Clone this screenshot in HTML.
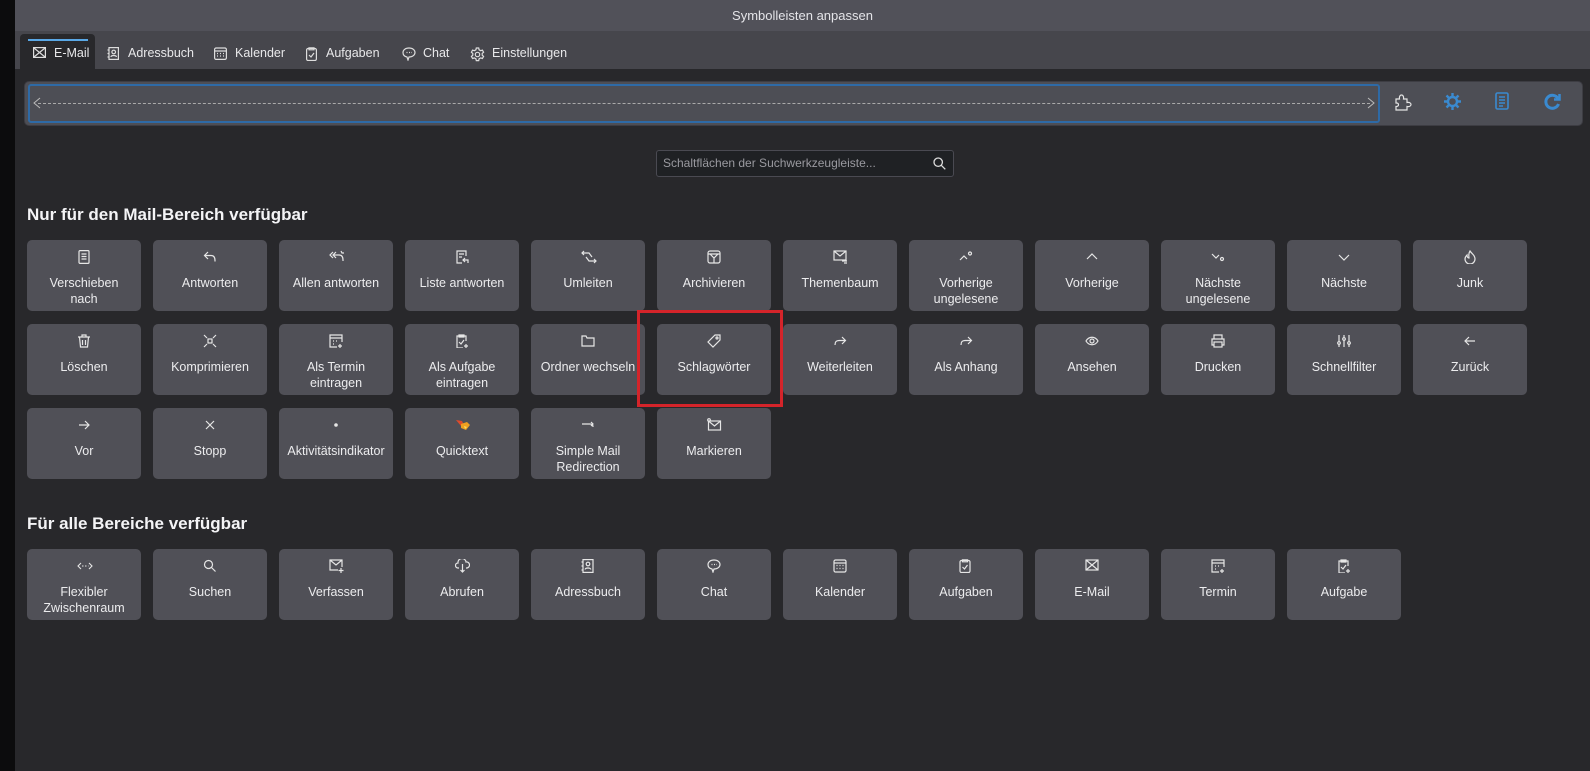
<!DOCTYPE html>
<html><head><meta charset="utf-8">
<style>
*{box-sizing:border-box;margin:0;padding:0}
body{width:1590px;height:771px;background:#0c0c0d;font-family:"Liberation Sans",sans-serif;overflow:hidden;position:relative;color:#ececec}
#win{position:absolute;left:15px;top:0;width:1575px;height:771px;background:#28282b}
#title{position:absolute;left:0;top:0;width:100%;height:31px;background:#515159;color:#e4e4e8;font-size:13px;text-align:center;line-height:31px}
#tabs{position:absolute;left:0;top:31px;width:100%;height:38px;background:#46464c}
.tab{position:absolute;top:0;height:38px;font-size:12.5px;color:#e8e8ea;line-height:45px;white-space:nowrap}
.tab svg{position:absolute;top:16px}
#tsel{position:absolute;left:5px;top:3px;width:75px;height:35px;background:#28282b;border-radius:4px 4px 0 0}
#tsel:before{content:"";position:absolute;left:8px;top:5px;width:60px;height:2px;background:#5aa8e6}
#tb{position:absolute;left:9px;top:81px;width:1559px;height:45px;background:#4d4e55;border:1px solid #3d3d43;border-radius:5px}
#drop{position:absolute;left:3px;top:2px;width:1352px;height:39px;border:2px solid #2e6aa6;border-radius:3px}
#drop:before{content:"";position:absolute;left:8px;right:8px;top:17px;border-top:1px dashed #aaa}
#search{position:absolute;left:641px;top:150px;width:298px;height:27px;background:#1f2124;border:1px solid #4a4a52;border-radius:3px;font-size:12px;color:#9a9aa0;line-height:25px;padding-left:6px}
h2{position:absolute;font-size:17px;font-weight:bold;color:#f4f4f6;white-space:nowrap}
.b{position:absolute;width:114px;height:71px;background:#505057;border-radius:5px;text-align:center;font-size:12.5px;color:#ececee}
.b svg{position:absolute;left:50px;top:10px}
.b span{position:absolute;left:0;right:0;top:35px;line-height:16px}
#red{position:absolute;left:622px;top:310px;width:146px;height:97px;border:3px solid #d4242a}
</style></head><body>
<div id="win">
<div id="title">Symbolleisten anpassen</div>
<div id="tabs">
<div id="tsel"></div>
<div class="tab" style="left:18px"><svg width="13" height="11" viewBox="0 0 13 11" fill="none" stroke="#ddd" stroke-width="1.2"><rect x="0.6" y="0.6" width="11.8" height="9.8"/><path d="M1 1l11 9M12 1L1 10"/></svg><span style="margin-left:21px">E-Mail</span></div>
<div class="tab" style="left:92px"><svg width="12" height="13" viewBox="0 0 12 13" fill="none" stroke="#ddd" stroke-width="1.2"><rect x="2" y="0.6" width="9.4" height="11.8"/><circle cx="6.7" cy="5" r="1.8"/><path d="M4 10c0-2 5.4-2 5.4 0M0.5 3h2M0.5 6.5h2M0.5 10h2"/></svg><span style="margin-left:21px">Adressbuch</span></div>
<div class="tab" style="left:199px"><svg width="13" height="13" viewBox="0 0 13 13" fill="none" stroke="#ddd" stroke-width="1.2"><rect x="0.6" y="1" width="11.8" height="11.4" rx="1.5"/><path d="M0.6 4h11.8M3 6.5h1M6 6.5h1M9 6.5h1M3 9h1M6 9h1M9 9h1"/></svg><span style="margin-left:21px">Kalender</span></div>
<div class="tab" style="left:291px"><svg width="11" height="14" viewBox="0 0 11 14" fill="none" stroke="#ddd" stroke-width="1.2"><rect x="0.6" y="1.5" width="9.8" height="12" rx="1.5"/><path d="M3 0.8h5v2H3zM3 8l2 2 3-4"/></svg><span style="margin-left:20px">Aufgaben</span></div>
<div class="tab" style="left:387px"><svg width="14" height="14" viewBox="0 0 14 14" fill="none" stroke="#ddd" stroke-width="1.2"><path d="M7 1c3.5 0 6 2 6 4.5S10.5 10 7 10L6 13 5 10C2.5 9.5 1 7.7 1 5.5 1 3 3.5 1 7 1z"/><path d="M4.5 5.5h1M7 5.5h1M9.5 5.5h.5"/></svg><span style="margin-left:21px">Chat</span></div>
<div class="tab" style="left:455px"><svg width="15" height="15" viewBox="0 0 15 15" fill="none" stroke="#ddd" stroke-width="1.2"><circle cx="7.5" cy="7.5" r="2.2"/><path d="M6.3 1h2.4l.4 1.8 1.6.9 1.7-.6 1.2 2.1-1.4 1.2v1.8l1.4 1.2-1.2 2.1-1.700-.6-1.6.9-.4 1.8H6.3l-.4-1.8-1.6-.9-1.7.6-1.2-2.1 1.4-1.2V6.4L1.4 5.2l1.2-2.1 1.7.6 1.6-.9z"/></svg><span style="margin-left:22px">Einstellungen</span></div>
</div>
<div id="tb"><div id="drop"><svg style="position:absolute;left:3px;top:11px" width="8" height="12" viewBox="0 0 8 12" fill="none" stroke="#bbb"><path d="M7 1L1 6l6 5"/></svg><svg style="position:absolute;right:3px;top:11px" width="8" height="12" viewBox="0 0 8 12" fill="none" stroke="#bbb"><path d="M1 1l6 5-6 5"/></svg></div>
<svg style="position:absolute;left:1369px;top:11px" width="18" height="18" viewBox="0 0 18 18" fill="none" stroke="#e4e4e4" stroke-width="1.2"><path d="M2 6h3.5C5 3 6.5 2 7.5 2S10 3 9.5 6H13v3.5c3-.5 4 1 4 2s-1 2.5-4 2V17H2v-3.5c2 0 2.5-1 2.5-1.8S4 9.8 2 10z"/></svg>
<svg style="position:absolute;left:1419px;top:11px" width="17" height="17" viewBox="0 0 17 17"><circle cx="8.5" cy="8.5" r="4.5" fill="none" stroke="#3a8ad0" stroke-width="2.4"/><g stroke="#3a8ad0" stroke-width="2.4"><path d="M8.5 0v4M8.5 13v4M0 8.5h4M13 8.5h4M2.5 2.5l2.8 2.8M11.7 11.7l2.8 2.8M14.5 2.5l-2.8 2.8M5.3 11.7l-2.8 2.8"/></g></svg>
<svg style="position:absolute;left:1470px;top:10px" width="14" height="18" viewBox="0 0 14 18" fill="none" stroke="#3a8ad0" stroke-width="1.6"><rect x="1" y="1" width="12" height="16" rx="1.5"/><path d="M4 5h6M4 8h6M4 11h6M4 14h4"/></svg>
<svg style="position:absolute;left:1519px;top:11px" width="18" height="17" viewBox="0 0 18 17" fill="none" stroke="#3a8ad0" stroke-width="3"><path d="M14 5.5A6.5 6.5 0 1 0 14.5 11"/><path d="M15.5 1v5.5H10" stroke-width="2.5"/></svg>
</div>
<div id="search">Schaltflächen der Suchwerkzeugleiste...<svg style="position:absolute;right:7px;top:6px" width="13" height="13" viewBox="0 0 13 13" fill="none" stroke="#ddd" stroke-width="1.3"><circle cx="5.2" cy="5.2" r="4.2"/><path d="M8.3 8.3L12.3 12.3"/></svg></div>

<h2 style="left:12px;top:205px">Nur für den Mail-Bereich verfügbar</h2>
<h2 style="left:12px;top:514px">Für alle Bereiche verfügbar</h2>

<div class="b" style="left:12px;top:240px"><svg width="14" height="14" viewBox="0 0 14 14" fill="none" stroke="#e6e6e6" stroke-width="1.2"><rect x="2" y="0.6" width="10" height="12.8" rx="1"/><path d="M4.5 4h5M4.5 6.5h5M4.5 9h5"/></svg><span>Verschieben<br>nach</span></div>
<div class="b" style="left:138px;top:240px"><svg width="14" height="14" viewBox="0 0 14 14" fill="none" stroke="#e6e6e6" stroke-width="1.2"><path d="M5 2L1.5 5.5 5 9M1.5 5.5H8c3 0 4 2 4 5v1"/></svg><span>Antworten</span></div>
<div class="b" style="left:264px;top:240px"><svg width="16" height="14" viewBox="0 0 16 14" fill="none" stroke="#e6e6e6" stroke-width="1.2"><path d="M4 2L1 5l3 3M7 2L4 5l3 3M4 5h6c3 0 4 2 4 5v1M12 1l1 2 2 0"/></svg><span>Allen antworten</span></div>
<div class="b" style="left:390px;top:240px"><svg width="14" height="14" viewBox="0 0 14 14" fill="none" stroke="#e6e6e6" stroke-width="1.2"><path d="M11 6V1H2v12h5M4 4h5M4 7h3"/><path d="M10 8l-2 2 2 2M8 10h5v3"/></svg><span>Liste antworten</span></div>
<div class="b" style="left:516px;top:240px"><svg width="16" height="14" viewBox="0 0 16 14" fill="none" stroke="#e6e6e6" stroke-width="1.2"><path d="M3 1L1 3l2 2M1 3h7l3 4M13 13l2-2-2-2M15 11H8L5 7"/></svg><span>Umleiten</span></div>
<div class="b" style="left:642px;top:240px"><svg width="14" height="14" viewBox="0 0 14 14" fill="none" stroke="#e6e6e6" stroke-width="1.2"><rect x="1" y="1" width="12" height="12" rx="2"/><path d="M1 4h12M3 4l4 4 4-4M7 8v5"/></svg><span>Archivieren</span></div>
<div class="b" style="left:768px;top:240px"><svg width="15" height="14" viewBox="0 0 15 14" fill="none" stroke="#e6e6e6" stroke-width="1.2"><rect x="1" y="1" width="12" height="9"/><path d="M1 1l6 5 6-5M9 11h5M11 13h3"/></svg><span>Themenbaum</span></div>
<div class="b" style="left:894px;top:240px"><svg width="14" height="14" viewBox="0 0 14 14" fill="none" stroke="#e6e6e6" stroke-width="1.2"><path d="M1 10l4-4 3 3"/><circle cx="11" cy="3.5" r="1.5"/></svg><span>Vorherige<br>ungelesene</span></div>
<div class="b" style="left:1020px;top:240px"><svg width="14" height="14" viewBox="0 0 14 14" fill="none" stroke="#e6e6e6" stroke-width="1.2"><path d="M2 9l5-5 5 5"/></svg><span>Vorherige</span></div>
<div class="b" style="left:1146px;top:240px"><svg width="14" height="14" viewBox="0 0 14 14" fill="none" stroke="#e6e6e6" stroke-width="1.2"><path d="M1 4l4 4 3-3"/><circle cx="11" cy="9" r="1.5"/></svg><span>Nächste<br>ungelesene</span></div>
<div class="b" style="left:1272px;top:240px"><svg width="14" height="14" viewBox="0 0 14 14" fill="none" stroke="#e6e6e6" stroke-width="1.2"><path d="M2 5l5 5 5-5"/></svg><span>Nächste</span></div>
<div class="b" style="left:1398px;top:240px"><svg width="14" height="14" viewBox="0 0 14 14" fill="none" stroke="#e6e6e6" stroke-width="1.2"><path d="M7 1C9 4 12 5 12 9a5 5 0 0 1-10 0c0-2 1-3 2-4 0 2 1 3 2 3C6 6 5 4 7 1z"/></svg><span>Junk</span></div>

<div class="b" style="left:12px;top:324px"><svg width="14" height="14" viewBox="0 0 14 14" fill="none" stroke="#e6e6e6" stroke-width="1.2"><path d="M1 3h12M5 3V1h4v2M2.5 3l1 10h7l1-10M5.5 6v5M8.5 6v5"/></svg><span>Löschen</span></div>
<div class="b" style="left:138px;top:324px"><svg width="14" height="14" viewBox="0 0 14 14" fill="none" stroke="#e6e6e6" stroke-width="1.2"><rect x="5" y="5" width="4" height="4"/><path d="M1 1l3 3M13 1l-3 3M1 13l3-3M13 13l-3-3"/></svg><span>Komprimieren</span></div>
<div class="b" style="left:264px;top:324px"><svg width="14" height="14" viewBox="0 0 14 14" fill="none" stroke="#e6e6e6" stroke-width="1.2"><path d="M13 8V1H1v12h7M1 4h12M4 7h1M7 7h1M4 10h1M11 10v4M9 12h4"/></svg><span>Als Termin<br>eintragen</span></div>
<div class="b" style="left:390px;top:324px"><svg width="14" height="14" viewBox="0 0 14 14" fill="none" stroke="#e6e6e6" stroke-width="1.2"><path d="M11 7V2H2v12h6M4 1h5v2H4zM4 8l2 2 3-4M11 10v4M9 12h4"/></svg><span>Als Aufgabe<br>eintragen</span></div>
<div class="b" style="left:516px;top:324px"><svg width="14" height="14" viewBox="0 0 14 14" fill="none" stroke="#e6e6e6" stroke-width="1.2"><path d="M1 2h4l1 2h7v8H1z"/></svg><span>Ordner wechseln</span></div>
<div class="b" style="left:642px;top:324px"><svg width="14" height="14" viewBox="0 0 14 14" fill="none" stroke="#e6e6e6" stroke-width="1.2"><path d="M8 1h5v5l-7 7-5-5z"/><circle cx="10" cy="4" r="1"/></svg><span>Schlagwörter</span></div>
<div class="b" style="left:768px;top:324px"><svg width="14" height="14" viewBox="0 0 14 14" fill="none" stroke="#e6e6e6" stroke-width="1.2"><path d="M9 3l3.5 3.5L9 10M12.5 6.5H6C3 6.5 2 8 2 11"/></svg><span>Weiterleiten</span></div>
<div class="b" style="left:894px;top:324px"><svg width="14" height="14" viewBox="0 0 14 14" fill="none" stroke="#e6e6e6" stroke-width="1.2"><path d="M9 3l3.5 3.5L9 10M12.5 6.5H6C3 6.5 2 8 2 11"/></svg><span>Als Anhang</span></div>
<div class="b" style="left:1020px;top:324px"><svg width="14" height="14" viewBox="0 0 14 14" fill="none" stroke="#e6e6e6" stroke-width="1.2"><path d="M1 7c3-5 9-5 12 0-3 5-9 5-12 0z"/><circle cx="7" cy="7" r="2"/></svg><span>Ansehen</span></div>
<div class="b" style="left:1146px;top:324px"><svg width="14" height="14" viewBox="0 0 14 14" fill="none" stroke="#e6e6e6" stroke-width="1.2"><path d="M3 5V1h8v4M3 11H1V5h12v6h-2"/><rect x="3" y="8" width="8" height="5"/></svg><span>Drucken</span></div>
<div class="b" style="left:1272px;top:324px"><svg width="14" height="14" viewBox="0 0 14 14" fill="none" stroke="#e6e6e6" stroke-width="1.2"><path d="M2 1v12M7 1v12M12 1v12"/><circle cx="2" cy="9" r="1.3" fill="#505057"/><circle cx="7" cy="5" r="1.3" fill="#505057"/><circle cx="12" cy="9" r="1.3" fill="#505057"/></svg><span>Schnellfilter</span></div>
<div class="b" style="left:1398px;top:324px"><svg width="14" height="14" viewBox="0 0 14 14" fill="none" stroke="#e6e6e6" stroke-width="1.2"><path d="M6 3L2 7l4 4M2 7h10"/></svg><span>Zurück</span></div>

<div class="b" style="left:12px;top:408px"><svg width="14" height="14" viewBox="0 0 14 14" fill="none" stroke="#e6e6e6" stroke-width="1.2"><path d="M8 3l4 4-4 4M12 7H2"/></svg><span>Vor</span></div>
<div class="b" style="left:138px;top:408px"><svg width="14" height="14" viewBox="0 0 14 14" fill="none" stroke="#e6e6e6" stroke-width="1.2"><path d="M3 3l8 8M11 3l-8 8"/></svg><span>Stopp</span></div>
<div class="b" style="left:264px;top:408px"><svg width="14" height="14" viewBox="0 0 14 14"><circle cx="7" cy="7" r="1.8" fill="#e6e6e6"/></svg><span>Aktivitätsindikator</span></div>
<div class="b" style="left:390px;top:408px"><svg width="16" height="14" viewBox="0 0 16 14"><path d="M1 2l6 1 2 4-3 1z" fill="#e04a2a"/><path d="M6 6l6-2 3 3-4 5-5-2z" fill="#f0a020"/><path d="M9 8l3 1-2 2z" fill="#fde060"/></svg><span>Quicktext</span></div>
<div class="b" style="left:516px;top:408px"><svg width="14" height="14" viewBox="0 0 14 14" fill="none" stroke="#e6e6e6" stroke-width="1.2"><path d="M1 6h8c2 0 3 1 3 3M10 4l2 2-2 2"/></svg><span>Simple Mail<br>Redirection</span></div>
<div class="b" style="left:642px;top:408px"><svg width="15" height="14" viewBox="0 0 15 14" fill="none" stroke="#e6e6e6" stroke-width="1.2"><rect x="1.5" y="3" width="12" height="9"/><path d="M1.5 3l6 5 6-5"/><circle cx="2" cy="2" r="1.3"/></svg><span>Markieren</span></div>

<div class="b" style="left:12px;top:549px"><svg width="16" height="14" viewBox="0 0 16 14" fill="none" stroke="#e6e6e6" stroke-width="1.1"><path d="M4 4L1 7l3 3M12 4l3 3-3 3M5 7h1.5M8 7h1.5M11 7h.5"/></svg><span>Flexibler<br>Zwischenraum</span></div>
<div class="b" style="left:138px;top:549px"><svg width="14" height="14" viewBox="0 0 14 14" fill="none" stroke="#e6e6e6" stroke-width="1.2"><circle cx="5.5" cy="5.5" r="4"/><path d="M8.5 8.5l4 4"/></svg><span>Suchen</span></div>
<div class="b" style="left:264px;top:549px"><svg width="15" height="14" viewBox="0 0 15 14" fill="none" stroke="#e6e6e6" stroke-width="1.2"><path d="M13 8V1H1v10h8M1 1l6 5 6-5M12 9v5M9.5 11.5h5"/></svg><span>Verfassen</span></div>
<div class="b" style="left:390px;top:549px"><svg width="15" height="14" viewBox="0 0 15 14" fill="none" stroke="#e6e6e6" stroke-width="1.2"><path d="M4 9H3a2.5 2.5 0 0 1 0-5 4 4 0 0 1 8-1 3 3 0 0 1 1 6h-1M7.5 5v8M5.5 11l2 2 2-2"/></svg><span>Abrufen</span></div>
<div class="b" style="left:516px;top:549px"><svg width="13" height="14" viewBox="0 0 13 14" fill="none" stroke="#e6e6e6" stroke-width="1.2"><rect x="2" y="0.6" width="10" height="12.8"/><circle cx="7" cy="5" r="1.8"/><path d="M4.2 10.5c0-2 5.6-2 5.6 0M0.5 3h2M0.5 7h2M0.5 11h2"/></svg><span>Adressbuch</span></div>
<div class="b" style="left:642px;top:549px"><svg width="14" height="14" viewBox="0 0 14 14" fill="none" stroke="#e6e6e6" stroke-width="1.2"><path d="M7 1c3.5 0 6 2 6 4.5S10.5 10 7 10L6 13 5 10C2.5 9.5 1 7.7 1 5.5 1 3 3.5 1 7 1z"/><path d="M4.5 5.5h1M7 5.5h1M9.5 5.5h.5"/></svg><span>Chat</span></div>
<div class="b" style="left:768px;top:549px"><svg width="14" height="14" viewBox="0 0 14 14" fill="none" stroke="#e6e6e6" stroke-width="1.2"><rect x="1" y="1" width="12" height="12" rx="1.5"/><path d="M1 4h12M3.5 6.5h1M6.5 6.5h1M9.5 6.5h1M3.5 9.5h1M6.5 9.5h1M9.5 9.5h1"/></svg><span>Kalender</span></div>
<div class="b" style="left:894px;top:549px"><svg width="12" height="14" viewBox="0 0 12 14" fill="none" stroke="#e6e6e6" stroke-width="1.2"><rect x="1" y="1.5" width="10" height="12" rx="1.5"/><path d="M3.5 0.8h5v2h-5zM3.5 8l2 2 3-4"/></svg><span>Aufgaben</span></div>
<div class="b" style="left:1020px;top:549px"><svg width="14" height="12" viewBox="0 0 14 12" fill="none" stroke="#e6e6e6" stroke-width="1.2"><rect x="1" y="1" width="12" height="10"/><path d="M1 1l12 10M13 1L1 11"/></svg><span>E-Mail</span></div>
<div class="b" style="left:1146px;top:549px"><svg width="14" height="14" viewBox="0 0 14 14" fill="none" stroke="#e6e6e6" stroke-width="1.2"><path d="M13 8V1H1v12h7M1 4h12M4 7h1M7 7h1M4 10h1M11 10v4M9 12h4"/></svg><span>Termin</span></div>
<div class="b" style="left:1272px;top:549px"><svg width="14" height="14" viewBox="0 0 14 14" fill="none" stroke="#e6e6e6" stroke-width="1.2"><path d="M11 7V2H2v12h6M4 1h5v2H4zM4 8l2 2 3-4M11 10v4M9 12h4"/></svg><span>Aufgabe</span></div>

<div id="red"></div>
</div>
</body></html>
